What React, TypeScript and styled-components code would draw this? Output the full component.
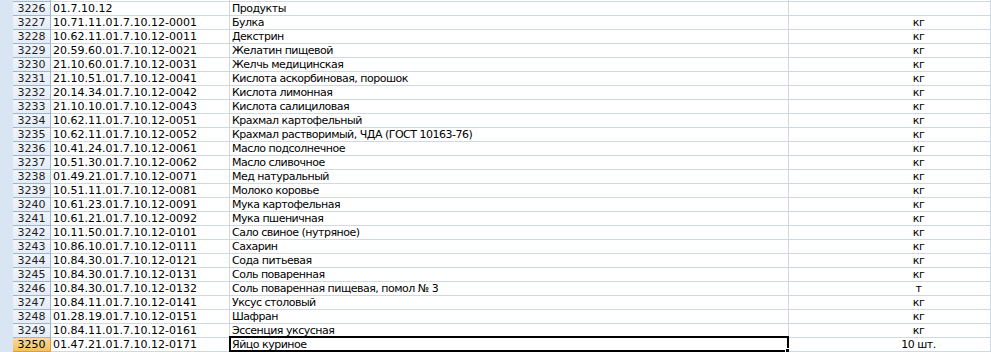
import React from "react";
import styled, { createGlobalStyle, css } from "styled-components";

const Global = createGlobalStyle`
  html, body { margin: 0; padding: 0; background: #ffffff; overflow: hidden; }
  body { font-family: "DejaVu Sans", Verdana, sans-serif; font-size: 11px; color: #000; }
`;

const Window = styled.div`
  display: flex;
  width: 991px;
  height: 352px;
  overflow: hidden;
  background: #fff;
`;

const Strip = styled.div`
  width: 13px;
  flex: none;
  background: #dae5f3;
`;

const Sheet = styled.div`
  flex: 1;
  display: flex;
  flex-direction: column;
  margin-top: -12px;
`;

const Row = styled.div`
  display: flex;
  height: 14px;
  flex: none;
`;

const RowHead = styled.div<{ $sel?: boolean }>`
  width: 38px;
  flex: none;
  box-sizing: border-box;
  height: 14px;
  line-height: 13px;
  text-align: center;
  border-right: 1px solid #9eb6ce;
  border-bottom: 1px solid #9eb6ce;
  background: linear-gradient(#f1f5fb, #e4ecf7);
  color: #1f1f1f;
  ${(p) =>
    p.$sel &&
    css`
      background: linear-gradient(#f9d99f, #f1c15f);
      border-right-color: #f29536;
      border-bottom-color: #f29536;
      color: #000;
    `}
`;

const Cell = styled.div<{ $w: number; $align?: "left" | "center"; $tight?: boolean }>`
  position: relative;
  width: ${(p) => p.$w}px;
  flex: none;
  box-sizing: border-box;
  height: 14px;
  line-height: 13px;
  padding-left: 2px;
  white-space: nowrap;
  overflow: visible;
  border-right: 1px solid #d0d7e5;
  border-bottom: 1px solid #d0d7e5;
  ${(p) => p.$tight && css`letter-spacing: -0.5px;`}
  ${(p) =>
    p.$align === "center" &&
    css`
      text-align: center;
      padding-left: 58px;
    `}
`;

const Selection = styled.div`
  position: absolute;
  left: -1px;
  top: -2px;
  right: -1px;
  bottom: -1px;
  border: 2px solid #000;
  pointer-events: none;
`;

const Handle = styled.div`
  position: absolute;
  right: -3px;
  bottom: -3px;
  width: 5px;
  height: 5px;
  background: #000;
  border: 1px solid #fff;
  box-sizing: border-box;
`;

type R = { n: number; code: string; name: string; unit: string };

const rows: R[] = [
  { n: 3225, code: "", name: "Продукты и средства для приготовления", unit: "" },
  { n: 3226, code: "01.7.10.12", name: "Продукты", unit: "" },
  { n: 3227, code: "10.71.11.01.7.10.12-0001", name: "Булка", unit: "кг" },
  { n: 3228, code: "10.62.11.01.7.10.12-0011", name: "Декстрин", unit: "кг" },
  { n: 3229, code: "20.59.60.01.7.10.12-0021", name: "Желатин пищевой", unit: "кг" },
  { n: 3230, code: "21.10.60.01.7.10.12-0031", name: "Желчь медицинская", unit: "кг" },
  { n: 3231, code: "21.10.51.01.7.10.12-0041", name: "Кислота аскорбиновая, порошок", unit: "кг" },
  { n: 3232, code: "20.14.34.01.7.10.12-0042", name: "Кислота лимонная", unit: "кг" },
  { n: 3233, code: "21.10.10.01.7.10.12-0043", name: "Кислота салициловая", unit: "кг" },
  { n: 3234, code: "10.62.11.01.7.10.12-0051", name: "Крахмал картофельный", unit: "кг" },
  { n: 3235, code: "10.62.11.01.7.10.12-0052", name: "Крахмал растворимый, ЧДА (ГОСТ 10163-76)", unit: "кг" },
  { n: 3236, code: "10.41.24.01.7.10.12-0061", name: "Масло подсолнечное", unit: "кг" },
  { n: 3237, code: "10.51.30.01.7.10.12-0062", name: "Масло сливочное", unit: "кг" },
  { n: 3238, code: "01.49.21.01.7.10.12-0071", name: "Мед натуральный", unit: "кг" },
  { n: 3239, code: "10.51.11.01.7.10.12-0081", name: "Молоко коровье", unit: "кг" },
  { n: 3240, code: "10.61.23.01.7.10.12-0091", name: "Мука картофельная", unit: "кг" },
  { n: 3241, code: "10.61.21.01.7.10.12-0092", name: "Мука пшеничная", unit: "кг" },
  { n: 3242, code: "10.11.50.01.7.10.12-0101", name: "Сало свиное (нутряное)", unit: "кг" },
  { n: 3243, code: "10.86.10.01.7.10.12-0111", name: "Сахарин", unit: "кг" },
  { n: 3244, code: "10.84.30.01.7.10.12-0121", name: "Сода питьевая", unit: "кг" },
  { n: 3245, code: "10.84.30.01.7.10.12-0131", name: "Соль поваренная", unit: "кг" },
  { n: 3246, code: "10.84.30.01.7.10.12-0132", name: "Соль поваренная пищевая, помол № 3", unit: "т" },
  { n: 3247, code: "10.84.11.01.7.10.12-0141", name: "Уксус столовый", unit: "кг" },
  { n: 3248, code: "01.28.19.01.7.10.12-0151", name: "Шафран", unit: "кг" },
  { n: 3249, code: "10.84.11.01.7.10.12-0161", name: "Эссенция уксусная", unit: "кг" },
  { n: 3250, code: "01.47.21.01.7.10.12-0171", name: "Яйцо куриное", unit: "10 шт." },
];

export default function App() {
  return (
    <>
      <Global />
      <Window>
        <Strip />
        <Sheet>
          {rows.map((r) => {
            const sel = r.n === 3250;
            return (
              <Row key={r.n}>
                <RowHead $sel={sel}>{r.n}</RowHead>
                <Cell $w={179}>{r.code}</Cell>
                <Cell $w={559} $tight>
                  {r.name}
                  {sel && (
                    <Selection>
                      <Handle />
                    </Selection>
                  )}
                </Cell>
                <Cell $w={202} $align="center" $tight>
                  {r.unit}
                </Cell>
              </Row>
            );
          })}
        </Sheet>
      </Window>
    </>
  );
}
